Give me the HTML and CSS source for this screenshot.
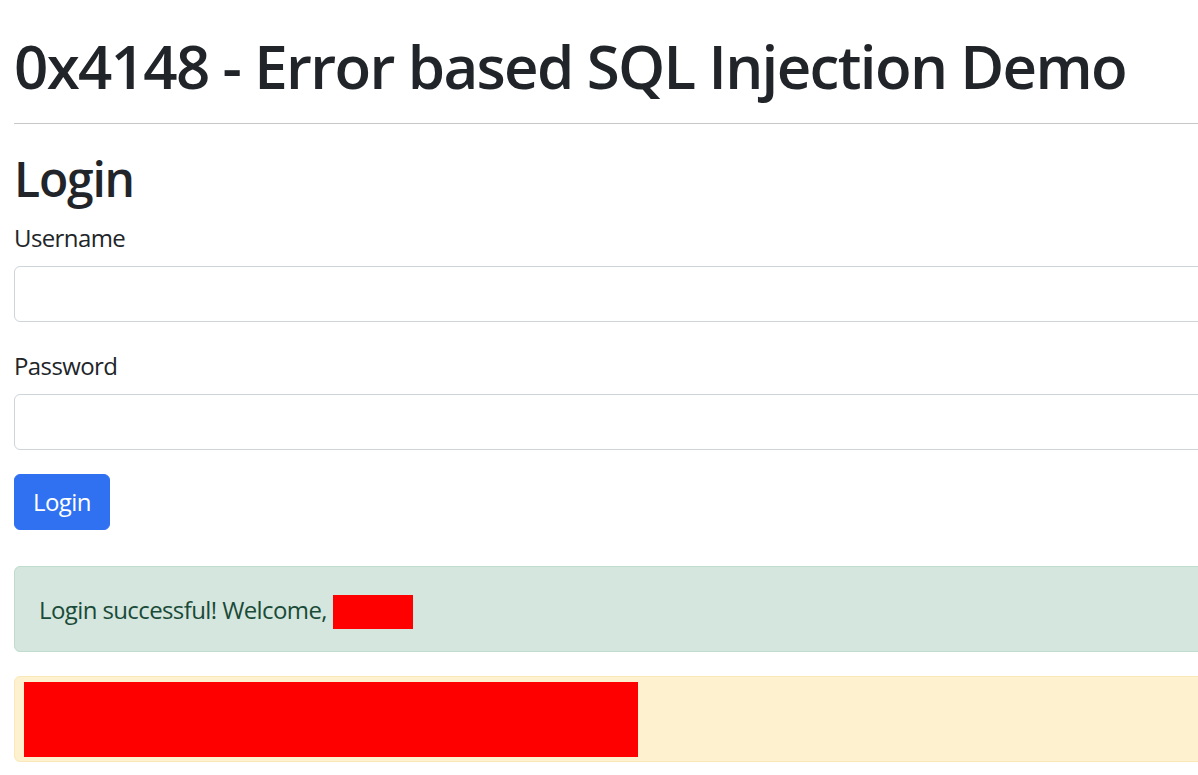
FILE: index.html
```html
<!DOCTYPE html>
<html lang="en">
<head>
<meta charset="utf-8">
<title>0x4148 - Error based SQL Injection Demo</title>
<link rel="stylesheet" href="styles.css">
</head>
<body>
<div class="page">
  <h1 class="title">0x4148 - Error based SQL Injection Demo</h1>
  <hr class="rule">
  <h2 class="subtitle">Login</h2>
  <form class="login-form">
    <div class="field">
      <label class="field-label" for="username">Username</label>
      <input class="field-input" id="username" type="text">
    </div>
    <div class="field">
      <label class="field-label" for="password">Password</label>
      <input class="field-input" id="password" type="password">
    </div>
    <button class="btn-primary" type="button">Login</button>
  </form>
  <div class="alert alert-success">Login successful! Welcome, <span class="redact-inline"></span></div>
  <div class="alert alert-warning">&nbsp;<span class="redact-block"></span></div>
</div>
</body>
</html>
```
FILE: styles.css
```css
html, body {
  margin: 0;
  padding: 0;
  overflow: hidden;
  background: #ffffff;
}
body {
  font-family: "Open Sans", "Noto Sans", sans-serif;
  color: #212529;
  font-size: 24px;
  line-height: 36px;
  letter-spacing: -0.6px;
}
.page {
  width: 1240px;
  padding: 30px 0 0 14px;
  display: flex;
  flex-direction: column;
}
.title {
  margin: 0;
  font-size: 60px;
  line-height: 72px;
  font-weight: 600;
  letter-spacing: -1.65px;
  white-space: nowrap;
}
.rule {
  margin: 21px 0 26px;
  border: 0;
  border-top: 1px solid #c8c8c8;
  height: 0;
  width: 100%;
}
.subtitle {
  margin: 0 0 10px;
  font-size: 48px;
  line-height: 58px;
  font-weight: 600;
  letter-spacing: -1.2px;
}
.login-form {
  display: flex;
  flex-direction: column;
  align-items: flex-start;
}
.field {
  display: flex;
  flex-direction: column;
  width: 100%;
  margin-bottom: 24px;
}
.field-label {
  padding-top: 2px;
  margin-bottom: 10px;
}
.field-input {
  box-sizing: border-box;
  height: 56px;
  width: 100%;
  border: 1px solid #ced4da;
  border-radius: 6px;
  background: #fff;
  font: inherit;
  padding: 0 18px;
}
.btn-primary {
  box-sizing: border-box;
  height: 56px;
  width: 96px;
  border: 1px solid #3071f2;
  background: #3071f2;
  color: #fff;
  border-radius: 6px;
  font: inherit;
  letter-spacing: -0.6px;
  padding: 0;
}
.alert {
  position: relative;
  box-sizing: border-box;
  height: 86px;
  padding: 25px 24px 23px;
  border: 1px solid transparent;
  border-radius: 6px;
  margin-bottom: 24px;
}
.login-form + .alert {
  margin-top: 36px;
}
.alert-success {
  background: #d4e6dd;
  border-color: #bfdccd;
  color: #1a4a38;
}
.alert-warning {
  background: #fdf1cf;
  border-color: #fbe8b8;
}
.redact-inline {
  display: inline-block;
  width: 80px;
  height: 34px;
  background: #ff0000;
  vertical-align: -10px;
}
.redact-block {
  position: absolute;
  left: 9px;
  top: 5px;
  width: 614px;
  height: 75px;
  background: #ff0000;
}
```
